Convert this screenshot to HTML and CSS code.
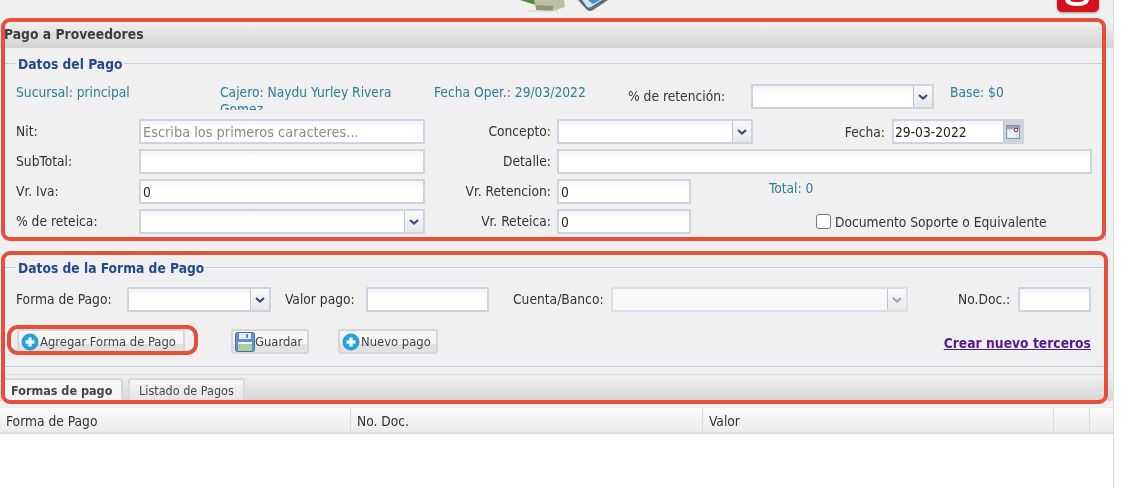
FILE: index.html
```html
<!DOCTYPE html>
<html lang="es">
<head>
<meta charset="utf-8">
<title>Pago a Proveedores</title>
<link rel="stylesheet" href="styles.css">
</head>
<body>
<div class="app">
  <div class="topbar">
    <svg class="ico-money" width="46" height="12" viewBox="0 0 46 12"><path d="M0 0h22l-6 5z" fill="#4f8f3a"/><path d="M14 0h30l1 7-12 4-17-1z" fill="#b9c2a4"/><path d="M16 5l17 1v5l-17-1z" fill="#8d9678"/><path d="M8 11h30" stroke="#ccc" stroke-width="1"/></svg>
    <svg class="ico-book" width="36" height="12" viewBox="0 0 36 12"><path d="M4 0h30l-15 10q-3 2-6 0z" fill="#5d6a78"/><path d="M8 0h20l-11 7q-2 1-4 0z" fill="#cfe3f2"/><path d="M14 0h12l-7 4z" fill="#3d8fd0"/></svg>
    <svg class="ico-red" width="44" height="13" viewBox="0 0 44 13"><path d="M1 0h42v6q0 6-6 6H7q-6 0-6-6z" fill="#d8101a"/><path d="M9 0q1 6 12 6t12-6h-5q0 2-7 2t-7-2z" fill="#fff"/></svg>
  </div>

  <div class="panel-head">Pago a Proveedores</div>

  <fieldset class="group group-pago">
    <legend>Datos del Pago</legend>
    <div class="info-row">
      <div class="info info-suc">Sucursal: principal</div>
      <div class="info info-caj">Cajero: Naydu Yurley Rivera Gomez</div>
      <div class="info info-fec">Fecha Oper.: 29/03/2022</div>
      <label class="lbl lbl-ret">% de retención:</label>
      <div class="combo combo-ret"><span class="combo-text"></span><span class="combo-btn"><svg width="10" height="6" viewBox="0 0 10 6"><path d="M1 1l4 3.6L9 1" fill="none" stroke="#2f4a80" stroke-width="2"/></svg></span></div>
      <div class="info info-base">Base: $0</div>
    </div>
    <div class="form-grid">
      <label class="lbl">Nit:</label>
      <input class="field field-nit" type="text" placeholder="Escriba los primeros caracteres...">
      <label class="lbl lbl-right">Concepto:</label>
      <div class="cell">
        <div class="combo combo-con"><span class="combo-text"></span><span class="combo-btn"><svg width="10" height="6" viewBox="0 0 10 6"><path d="M1 1l4 3.6L9 1" fill="none" stroke="#2f4a80" stroke-width="2"/></svg></span></div>
        <label class="lbl lbl-fecha">Fecha:</label>
        <div class="combo combo-date"><input class="combo-input" type="text" value="29-03-2022"><span class="combo-btn date-btn"><svg width="14" height="14" viewBox="0 0 14 14"><rect x="0.5" y="0.5" width="13" height="13" fill="#d9e3f0" stroke="#8b97ab"/><rect x="1" y="1" width="12" height="3" fill="#8ea5c6"/><path d="M3 6v6M6 6v6M2 8.5h8M2 11h8" stroke="#fff"/><circle cx="10" cy="5" r="1.8" fill="#fff" stroke="#a01c2c"/></svg></span></div>
      </div>

      <label class="lbl">SubTotal:</label>
      <input class="field" type="text">
      <label class="lbl lbl-right">Detalle:</label>
      <div class="cell"><input class="field field-detalle" type="text"></div>

      <label class="lbl">Vr. Iva:</label>
      <input class="field" type="text" value="0">
      <label class="lbl lbl-right">Vr. Retencion:</label>
      <div class="cell">
        <input class="field field-short" type="text" value="0">
        <div class="info info-total">Total: 0</div>
      </div>

      <label class="lbl">% de reteica:</label>
      <div class="combo"><span class="combo-text"></span><span class="combo-btn"><svg width="10" height="6" viewBox="0 0 10 6"><path d="M1 1l4 3.6L9 1" fill="none" stroke="#2f4a80" stroke-width="2"/></svg></span></div>
      <label class="lbl lbl-right">Vr. Reteica:</label>
      <div class="cell">
        <input class="field field-short" type="text" value="0">
        <label class="check"><span class="check-box"></span>Documento Soporte o Equivalente</label>
      </div>
    </div>
  </fieldset>

  <fieldset class="group group-forma">
    <legend>Datos de la Forma de Pago</legend>
    <div class="pay-row">
      <label class="lbl lbl-forma">Forma de Pago:</label>
      <div class="combo combo-forma"><span class="combo-text"></span><span class="combo-btn"><svg width="10" height="6" viewBox="0 0 10 6"><path d="M1 1l4 3.6L9 1" fill="none" stroke="#2f4a80" stroke-width="2"/></svg></span></div>
      <label class="lbl lbl-valor">Valor pago:</label>
      <input class="field field-valor" type="text">
      <label class="lbl lbl-cuenta">Cuenta/Banco:</label>
      <div class="combo combo-cuenta is-disabled"><span class="combo-text"></span><span class="combo-btn"><svg width="10" height="6" viewBox="0 0 10 6"><path d="M1 1l4 3.6L9 1" fill="none" stroke="#9aa6bd" stroke-width="2"/></svg></span></div>
      <label class="lbl lbl-nodoc">No.Doc.:</label>
      <input class="field field-nodoc" type="text">
    </div>
    <div class="btn-row">
      <button class="btn btn-add" type="button"><svg class="plus" width="18" height="18" viewBox="0 0 18 18"><circle cx="9" cy="9" r="8.5" fill="#2a9fd8"/><path d="M9 4.5v9M4.5 9h9" stroke="#e8f6fd" stroke-width="3.4"/></svg>Agregar Forma de Pago</button>
      <button class="btn btn-save" type="button"><svg width="20" height="20" viewBox="0 0 20 20"><rect x="0.5" y="0.5" width="19" height="19" rx="2" fill="#5f8fd0" stroke="#4a70ad"/><rect x="4" y="1" width="12" height="6" fill="#e4edf8"/><rect x="11" y="2" width="2" height="4" fill="#5f8fd0"/><rect x="3" y="11" width="14" height="8" fill="#a9cf9a"/><rect x="3" y="10" width="14" height="2" fill="#f0f4fa"/></svg>Guardar</button>
      <button class="btn btn-new" type="button"><svg class="plus" width="18" height="18" viewBox="0 0 18 18"><circle cx="9" cy="9" r="8.5" fill="#2a9fd8"/><path d="M9 4.5v9M4.5 9h9" stroke="#e8f6fd" stroke-width="3.4"/></svg>Nuevo pago</button>
      <a class="link" href="#">Crear nuevo terceros</a>
    </div>
  </fieldset>

  <div class="tabs">
    <span class="tab tab-active">Formas de pago</span>
    <span class="tab tab-list">Listado de Pagos</span>
  </div>

  <div class="thead">
    <div class="th th-a">Forma de Pago</div>
    <div class="th th-b">No. Doc.</div>
    <div class="th th-c">Valor</div>
    <div class="th th-d"></div>
    <div class="th th-e"></div>
  </div>
  <div class="tbody"></div>

  <div class="mark mark-1"></div>
  <div class="mark mark-2"></div>
  <div class="mark mark-3"></div>
</div>
</body>
</html>
```
FILE: styles.css
```css
* { box-sizing: border-box; }
html, body { margin: 0; padding: 0; background: #fff; }
body { width: 1146px; height: 488px; overflow: hidden; font-family: "DejaVu Sans Condensed", "DejaVu Sans", sans-serif; font-size: 13.7px; color: #333; }
.app { position: relative; width: 1114px; height: 488px; background: #f0f0f0; border-right: 1px solid #dcdcdc; display: flex; flex-direction: column; filter: blur(0.3px); }

.topbar { height: 21px; display: flex; align-items: flex-start; padding-left: 520px; flex: none; }
.ico-book { margin-left: 8px; }
.ico-red { margin-left: 446px; filter: drop-shadow(0 1px 1px #999); }

.panel-head { height: 27px; flex: none; padding: 4px 0 0 4px; font-weight: bold; font-size: 13.8px; line-height: 18px; color: #3d3d3d; background: linear-gradient(#f0f0f0, #d3d3d3); }

.group { margin: 7px 0 0 4px; width: 1102px; padding: 0 0 0 11px; border: 1px solid #c5cbdc; background: #f0f0f0; min-width: 0; }
.group legend { padding: 0 2px; margin-left: 0; font-size: 13.7px; line-height: 17px; font-weight: bold; color: #24498f; position: relative; top: 1px; }
.group-pago { height: 186px; border-bottom-color: transparent; }
.group-forma { margin-top: 18px; height: 108px; }

.info-row { display: flex; align-items: flex-start; height: 26px; margin-top: 12px; }
.info { color: #2d7c99; line-height: 17px; }
.info-suc { width: 204px; }
.info-caj { width: 190px; height: 26px; overflow: hidden; }
.info-fec { margin-left: 24px; width: 194px; }
.lbl-ret { width: 123px; line-height: 24px; }
.combo-ret { width: 183px; }
.info-base { margin-left: 16px; }

.form-grid { display: grid; grid-template-columns: 123px 286px 132px 535px; row-gap: 5px; grid-auto-rows: 25px; margin-top: 9px; }
.lbl { line-height: 24px; white-space: nowrap; color: #333; }
.lbl-right { text-align: right; padding-right: 6px; }
.cell { display: flex; align-items: center; }

.field { height: 25px; width: 100%; padding: 1px 2px; border: 2px solid #cdd2e0; background: linear-gradient(#f4f4f4, #fff 7px); font: inherit; color: #222; outline: none; border-radius: 1px; }
.field::placeholder { color: #8a8a8a; opacity: 1; }
.field-nit::placeholder { font-size: 14.4px; }
.field-short { width: 134px; flex: none; }
.field-detalle { width: 535px; }
.field-valor { width: 123px; flex: none; }
.field-nodoc { width: 73px; flex: none; }

.combo { display: flex; height: 25px; border: 2px solid #cdd2e0; background: linear-gradient(#f4f4f4, #fff 7px); border-radius: 1px; flex: none; }
.combo-text { flex: 1; }
.combo-btn { width: 19px; flex: none; display: flex; align-items: center; justify-content: center; border-left: 1px solid #bdc3d3; background: linear-gradient(#fafafa, #e8e8ea); }
.combo-input { flex: 1; width: 0; min-width: 0; border: 0; padding: 1px 1px; background: transparent; font: inherit; color: #222; outline: none; }
.combo-con { width: 196px; }
.lbl-fecha { width: 139px; text-align: right; padding-right: 7px; flex: none; }
.combo-date { width: 132px; }
.date-btn { background: #cfd2d8; }
.info-total { margin-left: 78px; align-self: flex-start; padding-top: 1px; }

.check { display: flex; align-items: center; margin-left: 125px; white-space: nowrap; color: #333; position: relative; }
.check-box { width: 15px; height: 15px; margin-right: 4px; border: 1px solid #767676; border-radius: 3px; background: #fff; }

.pay-row { display: flex; height: 25px; margin-top: 11px; }
.lbl-forma { width: 111px; flex: none; }
.combo-forma { width: 144px; }
.lbl-valor { margin-left: 14px; width: 81px; flex: none; }
.lbl-cuenta { margin-left: 24px; width: 98px; flex: none; }
.combo-cuenta { width: 297px; }
.is-disabled { background: #f7f8f8; border-color: #dcdfe7; }
.lbl-nodoc { margin-left: 50px; width: 60px; flex: none; }

.btn-row { display: flex; align-items: flex-start; height: 25px; margin-top: 17px; position: relative; }
.btn { display: flex; align-items: center; height: 25px; padding: 0 2px; border: 2px solid #d6d6d6; border-radius: 3px; font: inherit; font-size: 12.9px; color: #444; background: linear-gradient(#f5f5f5 0, #f5f5f5 62%, #dfdfdf 62%, #e4e4e4 100%); flex: none; white-space: nowrap; }
.btn svg { margin-right: 1px; flex: none; }
.btn-add { width: 168px; margin-left: 1px; }
.btn-save { width: 78px; margin-left: 46px; }
.btn-save svg { margin-right: 0; }
.btn-new { width: 100px; margin-left: 29px; }
.link { margin-left: auto; margin-right: 14px; font-weight: bold; font-size: 13.75px; line-height: 28px; color: #551a8b; }

.tabs { height: 27px; margin-top: 7px; flex: none; display: flex; align-items: flex-end; gap: 5px; border-top: 1px solid #dcdcdc; background: linear-gradient(#f0f0f0, #d6d6d6); }
.tab { height: 23px; padding: 0 9px; font-size: 12.5px; line-height: 22px; color: #444; border: 2px solid #d8d8d8; border-bottom: 0; border-radius: 3px 3px 0 0; background: linear-gradient(#f6f6f6, #e4e4e4); white-space: nowrap; }
.tab-list { width: 117px; }
.tab-active { width: 123px; font-weight: bold; background: #f5f5f5; }

.thead { display: flex; height: 27px; margin-top: 6px; flex: none; background: linear-gradient(#fafafa, #ebebeb); border-top: 1px solid #ececec; border-bottom: 2px solid #dedede; }
.th { padding-left: 6px; line-height: 26px; color: #333; border-right: 1px solid #dcdcdc; flex: none; }
.th-a { width: 351px; }
.th-b { width: 352px; }
.th-c { width: 351px; }
.th-d { width: 36px; }
.th-e { flex: 1; border-right: 0; }
.tbody { flex: 1; background: #fff; }

.mark { position: absolute; border: 4px solid #e5503c; border-radius: 9px; pointer-events: none; }
.mark-1 { left: 1px; top: 18px; width: 1105px; height: 223px; }
.mark-2 { left: 1px; top: 251px; width: 1107px; height: 153px; }
.mark-3 { left: 7px; top: 325px; width: 191px; height: 30px; border-radius: 11px; }
```
